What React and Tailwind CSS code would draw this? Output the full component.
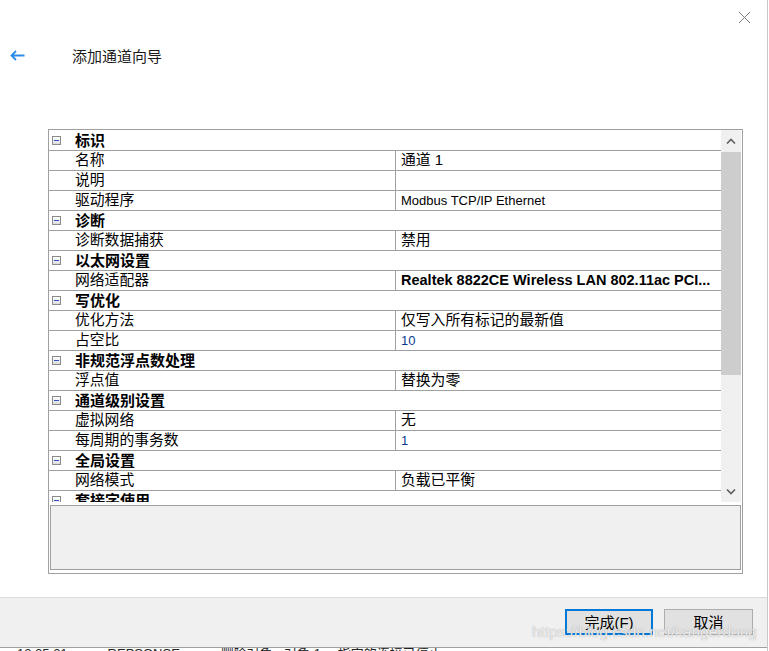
const rows = [
  { cat: "标识" },
  { name: "名称", value: "通道 1", cjk: true },
  { name: "说明", value: "" },
  { name: "驱动程序", value: "Modbus TCP/IP Ethernet" },
  { cat: "诊断" },
  { name: "诊断数据捕获", value: "禁用", cjk: true },
  { cat: "以太网设置" },
  { name: "网络适配器", value: "Realtek 8822CE Wireless LAN 802.11ac PCI...", bold: true },
  { cat: "写优化" },
  { name: "优化方法", value: "仅写入所有标记的最新值", cjk: true },
  { name: "占空比", value: "10", blue: true },
  { cat: "非规范浮点数处理" },
  { name: "浮点值", value: "替换为零", cjk: true },
  { cat: "通道级别设置" },
  { name: "虚拟网络", value: "无", cjk: true },
  { name: "每周期的事务数", value: "1", blue: true },
  { cat: "全局设置" },
  { name: "网络模式", value: "负载已平衡", cjk: true },
  { cat: "套接字使用" },
];

function Minus() {
  return (
    <span className="ml-[3px] flex h-[9px] w-[9px] shrink-0 items-center justify-center border border-[#8a8a8a] bg-gradient-to-b from-white to-[#dcdcdc]">
      <span className="h-[1px] w-[5px] bg-[#2f55c4]" />
    </span>
  );
}

function Row({ row }) {
  if (row.cat) {
    return (
      <div className="flex h-[20px] shrink-0 items-center border-b border-[#a0a0a0]">
        <Minus />
        <span className="ml-[14px] text-[15px] font-bold leading-none text-black">{row.cat}</span>
      </div>
    );
  }
  const valueCls = row.bold
    ? "text-[14.5px] font-bold text-black"
    : row.blue
    ? "text-[13px] text-[#0b3b8f]"
    : row.cjk
    ? "text-[14.8px] text-black"
    : "text-[13px] text-black";
  return (
    <div className="flex h-[20px] shrink-0 border-b border-[#a0a0a0]">
      <div className="flex w-[347px] shrink-0 items-center border-r border-[#a0a0a0] pl-[26px] text-[14.8px] leading-none text-black">
        {row.name}
      </div>
      <div className={"flex min-w-0 flex-1 items-center overflow-hidden whitespace-nowrap pl-[5px] leading-none " + valueCls}>
        {row.value}
      </div>
    </div>
  );
}

function Chevron({ up }) {
  return (
    <svg width="10" height="6" viewBox="0 0 10 6">
      <path
        d={up ? "M1 5.5 L5 1.5 L9 5.5" : "M1 0.5 L5 4.5 L9 0.5"}
        fill="none"
        stroke="#606060"
        strokeWidth="1.6"
      />
    </svg>
  );
}

export default function App() {
  return (
    <div className="flex h-[651px] w-[769px] overflow-hidden bg-white font-['Liberation_Sans','Noto_Sans_CJK_SC',sans-serif]">
      <div className="flex w-[768px] shrink-0 flex-col border-r border-[#c8c8c8]">
        {/* header */}
        <div className="flex h-[129px] shrink-0 flex-col">
          <div className="flex h-[35px] justify-end pr-[16px] pt-[11px]">
            <svg width="13" height="13" viewBox="0 0 13 13">
              <path d="M1 1 L12 12 M12 1 L1 12" stroke="#7a7a7a" strokeWidth="1" fill="none" />
            </svg>
          </div>
          <div className="flex h-[42px] items-center">
            <svg className="ml-[10px] -mt-[1px]" width="15" height="11" viewBox="0 0 15 11">
              <path d="M14.5 5.5 H1.5 M6 1 L1.5 5.5 L6 10" stroke="#2f8be6" strokeWidth="1.8" fill="none" />
            </svg>
            <span className="ml-[47px] -mt-[2px] text-[15px] leading-none text-[#1a1a1a] font-['Noto_Sans_CJK_SC',sans-serif]">
              添加通道向导
            </span>
          </div>
        </div>

        {/* property grid */}
        <div className="ml-[48px] flex h-[445px] w-[695px] shrink-0 flex-col border border-[#a0a0a0]">
          <div className="flex h-[372px] shrink-0">
            <div className="flex w-[672px] shrink-0 flex-col overflow-hidden pt-[1px]">
              {rows.map((r, i) => (
                <Row key={i} row={r} />
              ))}
            </div>
            <div className="flex w-[20px] shrink-0 flex-col bg-[#f0f0f0]">
              <div className="flex h-[21px] items-center justify-center">
                <Chevron up />
              </div>
              <div className="mt-[1px] h-[223px] bg-[#cdcdcd]" />
              <div className="flex-1" />
              <div className="flex h-[21px] items-center justify-center">
                <Chevron />
              </div>
            </div>
          </div>
          <div className="ml-[1px] mt-[3px] h-[65px] w-[691px] shrink-0 border border-[#a0a0a0] bg-[#f0f0f0]" />
        </div>

        <div className="h-[23px] shrink-0" />

        {/* footer */}
        <div className="relative flex h-[51px] shrink-0 items-start border-b border-t border-b-[#a0a0a0] border-t-[#dadada] bg-[#f0f0f0] pt-[11px]">
          <div className="ml-[565px] flex h-[26px] w-[88px] items-center justify-center border-2 border-[#0078d7] bg-[#e1e1e1] text-[15px] leading-none text-black">
            完成(F)
          </div>
          <div className="ml-[11px] flex h-[26px] w-[89px] items-center justify-center border border-[#adadad] bg-[#e1e1e1] text-[15px] leading-none text-black">
            取消
          </div>
          <span className="absolute left-[532px] top-[26px] text-[15.5px] leading-none text-white/80 [text-shadow:0_0_1px_#8a8a8a]">
            https://blog.csdn.net/kangerdong
          </span>
        </div>

        {/* background window text, mostly cut off */}
        <div className="h-[3px] overflow-hidden">
          <div className="-mt-[1px] flex text-[13px] leading-[13px] text-[#222]">
            <span className="ml-[17px]">12:25:21</span>
            <span className="ml-[40px]">REPSONSE...</span>
            <span className="ml-[30px]">删除对象 - 对象 1 ，指定的连接已停止。</span>
          </div>
        </div>
      </div>
    </div>
  );
}
